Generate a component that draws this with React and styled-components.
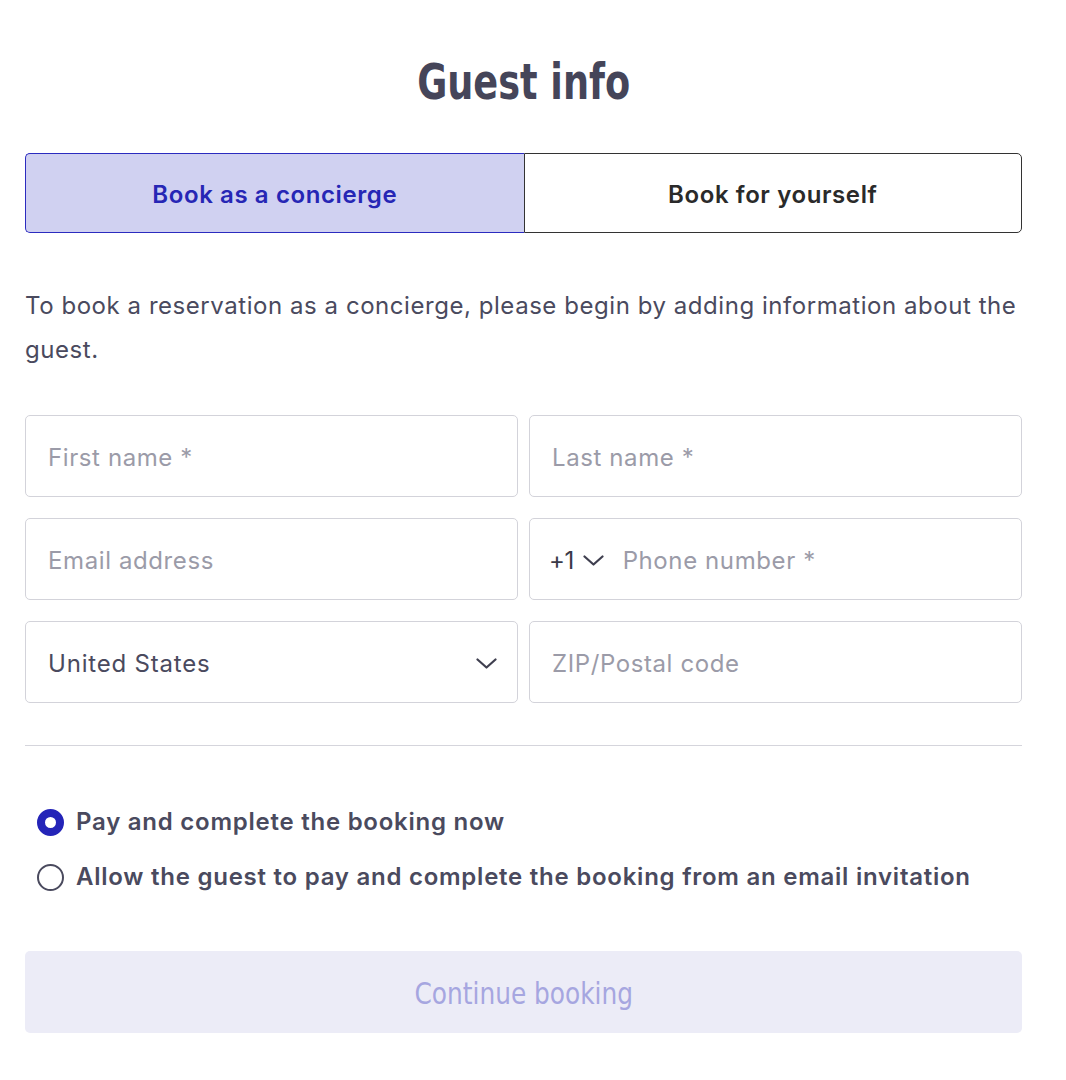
import React, { useState } from "react";
import styled, { createGlobalStyle } from "styled-components";

const Global = createGlobalStyle`
  html, body { margin: 0; padding: 0; background: #fff; }
  body { font-family: Inter, "Noto Sans", sans-serif; color: #4a4a5e; }
  * { box-sizing: border-box; }
`;

const Page = styled.div`
  width: 1066px;
  padding: 52px 44px 40px 25px;
  display: flex;
  flex-direction: column;
`;

const Title = styled.h1`
  margin: 0;
  text-align: center;
  font-family: "Liberation Sans Narrow", "DejaVu Sans Condensed", "Roboto Condensed", "DejaVu Sans", sans-serif;
  font-weight: 700;
  font-size: 50px;
  line-height: 60px;
  color: #454559;
`;

const Squeeze = styled.span`
  display: inline-block;
  transform: scaleX(${(p) => p.$x});
  transform-origin: center;
`;

const Tabs = styled.div`
  margin-top: 41px;
  display: grid;
  grid-template-columns: 1fr 1fr;
  height: 80px;
`;

const Tab = styled.button`
  font-family: Inter, "Noto Sans", sans-serif;
  font-size: 24px;
  font-weight: 600;
  letter-spacing: 0.6px;
  padding-top: 3px;
  cursor: pointer;
  border: 1.5px solid ${(p) => (p.$active ? "#2b2bbf" : "#333")};
  background: ${(p) => (p.$active ? "#d0d1f1" : "#fff")};
  color: ${(p) => (p.$active ? "#2626b5" : "#2a2a2a")};
  border-radius: ${(p) => (p.$left ? "5px 0 0 5px" : "0 5px 5px 0")};
  ${(p) => (p.$left ? "border-right: none;" : "")}
`;

const Intro = styled.p`
  margin: 51px 0 0;
  font-size: 24px;
  line-height: 44px;
  letter-spacing: 0.55px;
  color: #4a4a5e;
`;

const Grid = styled.div`
  margin-top: 43px;
  display: grid;
  grid-template-columns: 1fr 1fr;
  column-gap: 11px;
  row-gap: 21px;
`;

const Field = styled.div`
  height: 82px;
  border: 1.5px solid #d3d3da;
  border-radius: 5px;
  display: flex;
  align-items: center;
  padding: 2px 20px 0 22px;
  font-size: 24px;
  letter-spacing: 0.6px;
`;

const Placeholder = styled.span`
  color: #9b9ba8;
  flex: 1;
`;

const Value = styled.span`
  color: #4a4a5e;
  flex: 1;
  letter-spacing: 0.8px;
`;

const Code = styled.span`
  color: #3a3a48;
  display: flex;
  align-items: center;
  gap: 9px;
  margin-left: -3px;
  margin-right: 19px;
  letter-spacing: -0.5px;
`;

const Divider = styled.hr`
  margin: 42px 0 0;
  border: none;
  border-top: 1.5px solid #d5d5dc;
`;

const Radios = styled.div`
  margin-top: 61px;
  display: flex;
  flex-direction: column;
  gap: 25px;
  padding-left: 12px;
`;

const RadioRow = styled.label`
  display: flex;
  align-items: center;
  gap: 12px;
  font-size: 24px;
  font-weight: 600;
  letter-spacing: 0.75px;
  color: #4a4a5e;
  line-height: 30px;
  cursor: pointer;
`;

const Dot = styled.span`
  width: 27px;
  height: 27px;
  border-radius: 50%;
  flex: none;
  border: ${(p) => (p.$on ? "8px solid #2424b8" : "2px solid #4a4a5e")};
  background: #fff;
`;

const Continue = styled.button`
  margin-top: 59px;
  height: 82px;
  border: none;
  border-radius: 5px;
  background: #ececf7;
  color: #a6a6e0;
  font-family: "Liberation Sans Narrow", "DejaVu Sans Condensed", "DejaVu Sans", sans-serif;
  font-size: 30px;
  font-weight: 400;
  padding-top: 4px;
`;

const Chevron = () => (
  <svg width="21" height="11" viewBox="0 0 21 11" fill="none">
    <path d="M1.5 1.5 L10.5 9.5 L19.5 1.5" stroke="#3f3f4f" strokeWidth="2.2" strokeLinecap="round" strokeLinejoin="round" />
  </svg>
);

export default function App() {
  const [pay, setPay] = useState(0);
  const [tab, setTab] = useState(0);
  return (
    <>
      <Global />
      <Page>
        <Title><Squeeze $x={0.815}>Guest info</Squeeze></Title>
        <Tabs>
          <Tab $left $active={tab === 0} onClick={() => setTab(0)}>Book as a concierge</Tab>
          <Tab $active={tab === 1} onClick={() => setTab(1)}>Book for yourself</Tab>
        </Tabs>
        <Intro>
          To book a reservation as a concierge, please begin by adding information about the guest.
        </Intro>
        <Grid>
          <Field><Placeholder>First name *</Placeholder></Field>
          <Field><Placeholder>Last name *</Placeholder></Field>
          <Field><Placeholder>Email address</Placeholder></Field>
          <Field>
            <Code>+1<Chevron /></Code>
            <Placeholder>Phone number *</Placeholder>
          </Field>
          <Field>
            <Value>United States</Value>
            <Chevron />
          </Field>
          <Field><Placeholder>ZIP/Postal code</Placeholder></Field>
        </Grid>
        <Divider />
        <Radios>
          <RadioRow onClick={() => setPay(0)}>
            <Dot $on={pay === 0} />
            Pay and complete the booking now
          </RadioRow>
          <RadioRow onClick={() => setPay(1)}>
            <Dot $on={pay === 1} />
            Allow the guest to pay and complete the booking from an email invitation
          </RadioRow>
        </Radios>
        <Continue><Squeeze $x={0.92}>Continue booking</Squeeze></Continue>
      </Page>
    </>
  );
}
